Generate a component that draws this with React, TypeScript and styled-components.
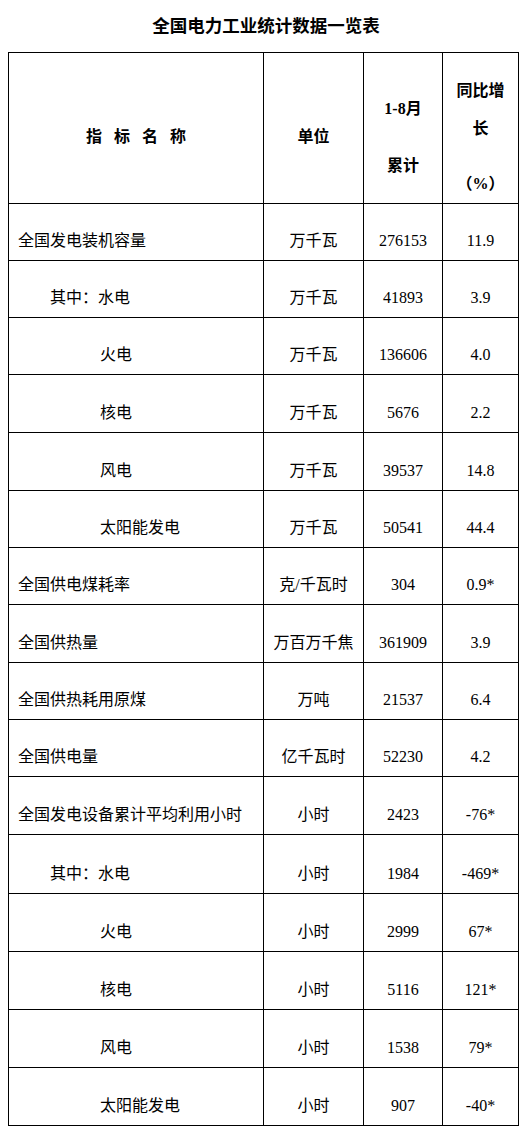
import React from "react";
import styled, { createGlobalStyle } from "styled-components";

const GlobalStyle = createGlobalStyle`
   body {
      margin: 8px;
      background: #fff;
      color: #000;
      font-family: "Liberation Serif", "Noto Sans CJK SC", serif;
   }
`;

const Title = styled.h1`
   margin: 0 0 12px;
   height: 32px;
   display: flex;
   align-items: center;
   justify-content: center;
   font-size: 17.5px;
   font-weight: 700;
   font-family: "Noto Sans CJK SC", sans-serif;
`;

const Table = styled.table`
   width: 510px;
   border-collapse: collapse;
   table-layout: fixed;
   font-size: 16px;
`;

const HeadRow = styled.tr`
   height: 151px;
`;

const HeadCell = styled.th<{ $top?: boolean; $pad?: number }>`
   border: 1px solid #000;
   padding: ${({ $pad }) => ($pad ? `${$pad}px 0 0` : "18px 0 0")};
   vertical-align: ${({ $top }) => ($top ? "top" : "middle")};
   text-align: center;
   font-weight: 700;
   line-height: 24px;
`;

const HeadLine = styled.div<{ $gap?: number }>`
   margin-top: ${({ $gap }) => $gap ?? 0}px;
`;

const Spaced = styled.span`
   word-spacing: 8px;
`;

const Cell = styled.td<{ $indent?: number; $left?: boolean }>`
   border: 1px solid #000;
   padding: 0 0 8px ${({ $indent, $left }) => ($left ? 9 + ($indent ?? 0) : 0)}px;
   vertical-align: bottom;
   text-align: ${({ $left }) => ($left ? "left" : "center")};
   line-height: 22px;
   white-space: nowrap;
`;

type Row = {
   name: string;
   indent: number;
   unit: string;
   total: string;
   growth: string;
   h: number;
};

const rows: Row[] = [
   { name: "全国发电装机容量", indent: 0, unit: "万千瓦", total: "276153", growth: "11.9", h: 57 },
   { name: "其中：水电", indent: 32, unit: "万千瓦", total: "41893", growth: "3.9", h: 57 },
   { name: "火电", indent: 82, unit: "万千瓦", total: "136606", growth: "4.0", h: 57 },
   { name: "核电", indent: 82, unit: "万千瓦", total: "5676", growth: "2.2", h: 58 },
   { name: "风电", indent: 82, unit: "万千瓦", total: "39537", growth: "14.8", h: 58 },
   { name: "太阳能发电", indent: 82, unit: "万千瓦", total: "50541", growth: "44.4", h: 57 },
   { name: "全国供电煤耗率", indent: 0, unit: "克/千瓦时", total: "304", growth: "0.9*", h: 57 },
   { name: "全国供热量", indent: 0, unit: "万百万千焦", total: "361909", growth: "3.9", h: 58 },
   { name: "全国供热耗用原煤", indent: 0, unit: "万吨", total: "21537", growth: "6.4", h: 57 },
   { name: "全国供电量", indent: 0, unit: "亿千瓦时", total: "52230", growth: "4.2", h: 57 },
   { name: "全国发电设备累计平均利用小时", indent: 0, unit: "小时", total: "2423", growth: "-76*", h: 58 },
   { name: "其中：水电", indent: 32, unit: "小时", total: "1984", growth: "-469*", h: 59 },
   { name: "火电", indent: 82, unit: "小时", total: "2999", growth: "67*", h: 58 },
   { name: "核电", indent: 82, unit: "小时", total: "5116", growth: "121*", h: 58 },
   { name: "风电", indent: 82, unit: "小时", total: "1538", growth: "79*", h: 58 },
   { name: "太阳能发电", indent: 82, unit: "小时", total: "907", growth: "-40*", h: 58 },
];

export default function App() {
   return (
      <>
         <GlobalStyle />
         <Title>全国电力工业统计数据一览表</Title>
         <Table>
            <colgroup>
               <col style={{ width: 255 }} />
               <col style={{ width: 100 }} />
               <col style={{ width: 79 }} />
               <col style={{ width: 76 }} />
            </colgroup>
            <thead>
               <HeadRow>
                  <HeadCell>
                     <Spaced>指 标 名 称</Spaced>
                  </HeadCell>
                  <HeadCell>单位</HeadCell>
                  <HeadCell $top $pad={44}>
                     <HeadLine>1-8月</HeadLine>
                     <HeadLine $gap={33}>累计</HeadLine>
                  </HeadCell>
                  <HeadCell $top $pad={26}>
                     <HeadLine>同比增</HeadLine>
                     <HeadLine $gap={14}>长</HeadLine>
                     <HeadLine $gap={31}>（%）</HeadLine>
                  </HeadCell>
               </HeadRow>
            </thead>
            <tbody>
               {rows.map((r, idx) => (
                  <tr key={idx} style={{ height: r.h }}>
                     <Cell $left $indent={r.indent}>
                        {r.name}
                     </Cell>
                     <Cell>{r.unit}</Cell>
                     <Cell>{r.total}</Cell>
                     <Cell>{r.growth}</Cell>
                  </tr>
               ))}
            </tbody>
         </Table>
      </>
   );
}
